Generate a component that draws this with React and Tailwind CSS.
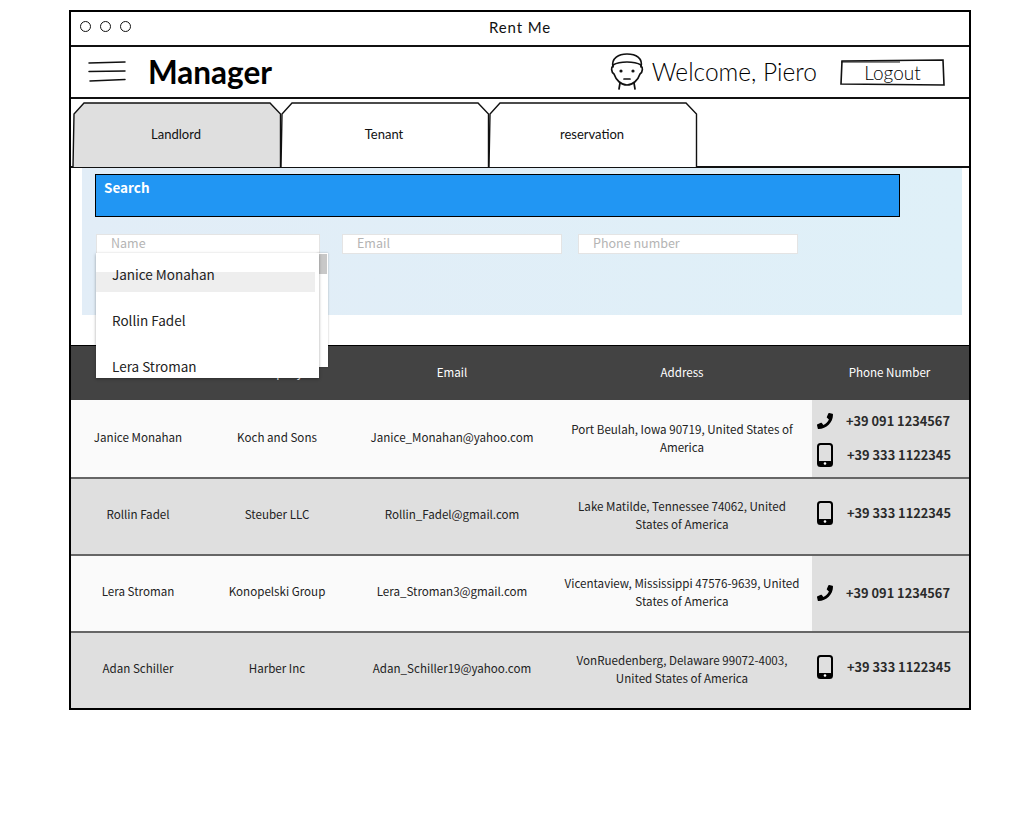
import React from 'react';
import { FaPhone } from 'react-icons/fa';

const people = [
  { name: 'Janice Monahan', company: 'Koch and Sons', email: 'Janice_Monahan@yahoo.com', address: 'Port Beulah, Iowa 90719, United States of America', phone: '+39 091 1234567', mobile: '+39 333 1122345' },
  { name: 'Rollin Fadel', company: 'Steuber LLC', email: 'Rollin_Fadel@gmail.com', address: 'Lake Matilde, Tennessee 74062, United States of America', mobile: '+39 333 1122345' },
  { name: 'Lera Stroman', company: 'Konopelski Group', email: 'Lera_Stroman3@gmail.com', address: 'Vicentaview, Mississippi 47576-9639, United States of America', phone: '+39 091 1234567' },
  { name: 'Adan Schiller', company: 'Harber Inc', email: 'Adan_Schiller19@yahoo.com', address: 'VonRuedenberg, Delaware 99072-4003, United States of America', mobile: '+39 333 1122345' },
];

const sketch = "font-['Lato',sans-serif]";

const MobileIcon = () => (
  <svg width="16" height="24" viewBox="0 0 16 24" className="shrink-0">
    <rect x="1" y="1" width="14" height="22" rx="2.5" fill="none" stroke="#000" strokeWidth="2" />
    <rect x="1" y="18" width="14" height="5" rx="1.5" fill="#000" />
    <circle cx="8" cy="20.5" r="1.3" fill="#fff" />
  </svg>
);

const Tab = ({ label, active }) => (
  <div className="relative w-[208px] h-[65px] flex items-center justify-center">
    <svg width="210" height="65" viewBox="0 0 210 65" className="absolute top-0 left-0">
      <path
        d="M1 65 L2 12 L12 1 L198 1 L208.5 12 L208.5 65"
        fill={active ? '#dfdfdf' : '#fff'}
        stroke="#111"
        strokeWidth="1.4"
      />
    </svg>
    <span className={`relative text-[13px] text-[#111] ${sketch}`}>{label}</span>
  </div>
);

const Dropdown = () => (
  <div className="absolute top-[19px] left-0 z-10">
    <div className="absolute top-0 left-[221px] w-[11px] h-[114px] bg-white shadow-[0_0_2px_rgba(0,0,0,0.25)]">
      <div className="ml-px mt-px w-[9px] h-5 bg-[#c8c8c8]" />
    </div>
    <div className="relative w-[223px] h-[125px] overflow-hidden bg-white shadow-[0_1px_3px_rgba(0,0,0,0.35)] text-[13.5px] text-[#222]">
      <div className="absolute top-[19px] left-0 w-[219px] h-5 bg-[#eeeeee]" />
      {['Janice Monahan', 'Rollin Fadel', 'Lera Stroman'].map((n) => (
        <div key={n} className="relative h-[46px] leading-[42px] pl-4">
          {n}
        </div>
      ))}
    </div>
  </div>
);

const Field = ({ placeholder, className }) => (
  <input
    placeholder={placeholder}
    className={`block h-5 bg-white border border-[#e4e4e4] pl-[14px] pb-1 text-[12.5px] placeholder:text-[#b4b4b4] outline-none ${className}`}
  />
);

const Row = ({ person, shaded, first }) => {
  const cell = `flex items-center justify-center ${first ? 'pb-[2px]' : 'pb-1'}`;
  return (
    <div className={`grid grid-cols-[134px_144px_206px_257px_157px] h-[77px] text-[11.6px] text-[#222] text-center ${first ? '' : 'border-t-2 border-[#666]'} ${shaded ? 'bg-[#dfdfdf]' : 'bg-[#fafafa]'}`}>
      <div className={cell}>{person.name}</div>
      <div className={cell}>{person.company}</div>
      <div className={cell}>{person.email}</div>
      <div className={`${cell} pl-[8px] pr-[11px] leading-[18px]`}>{person.address}</div>
      <div className={`flex flex-col justify-center bg-[#dfdfdf] font-bold text-[12.8px] text-[#2a2a2a] ${first ? '' : 'pb-1'}`}>
        {person.phone && (
          <div className="flex items-center h-[34px] mt-0.5 pl-[5px]">
            <FaPhone className="w-4 h-4 text-black shrink-0" />
            <span className="ml-[13px]">{person.phone}</span>
          </div>
        )}
        {person.mobile && (
          <div className="flex items-center h-[34px] mb-1 pl-[5px]">
            <MobileIcon />
            <span className="ml-[14px]">{person.mobile}</span>
          </div>
        )}
      </div>
    </div>
  );
};

export default function App() {
  return (
    <div className="min-h-[820px] bg-white pt-[10px] font-['Noto_Sans_CJK_JP','Noto_Sans',sans-serif]">
      <div className="ml-[69px] w-[902px] border-2 border-black">
        <div className="relative flex items-center justify-center h-[35px] pb-[2px] border-b-2 border-[#111]">
          <div className="absolute left-[9px] top-[9px] flex gap-[9px]">
            <span className="w-[11px] h-[11px] rounded-full border-[1.5px] border-[#111]" />
            <span className="w-[11px] h-[11px] rounded-full border-[1.5px] border-[#111]" />
            <span className="w-[11px] h-[11px] rounded-full border-[1.5px] border-[#111]" />
          </div>
          <span className={`text-[15px] tracking-[0.9px] text-[#111] ${sketch}`}>Rent Me</span>
        </div>

        <div className="flex items-center h-[52px] border-b-2 border-[#111]">
          <svg width="38" height="22" viewBox="0 0 38 22" className="ml-[17px]">
            <path d="M1 2 L37 1 M1 10.5 L37 10 M2 20 L37 18.5" stroke="#111" strokeWidth="1.5" strokeLinecap="round" />
          </svg>
          <span className="ml-[22px] mt-0.5 font-['Lato',sans-serif] font-bold text-[31.5px] leading-none text-black">Manager</span>
          <svg width="34" height="38" viewBox="0 0 34 38" className="ml-auto">
            <g fill="none" stroke="#111" strokeWidth="1.7" strokeLinecap="round" strokeLinejoin="round">
              <path d="M3 14 C1 5 9 1 17 1 C26 1 33 5 31 14" />
              <path d="M3 12 C10 8 24 8 31 12" />
              <path d="M3 13 C1 14 1 19 4 21 C6 27 11 32 17 32 C23 32 28 27 30 21 C33 19 33 14 31 13" />
              <path d="M10 30 L9 36 M24 30 L25 36" />
              <path d="M14 26 L20 26" />
            </g>
            <circle cx="11" cy="18" r="1.6" fill="#111" />
            <circle cx="23" cy="18" r="1.6" fill="#111" />
          </svg>
          <span className={`ml-2 text-[24.5px] font-light text-black ${sketch}`}>Welcome, Piero</span>
          <div className="relative ml-[23px] mr-6 w-[105px] h-[27px] flex items-center justify-center">
            <svg width="105" height="27" viewBox="0 0 105 27" className="absolute top-0 left-0">
              <path d="M2 2 L103 1 L104 26 L1 25 Z" fill="#fff" stroke="#111" strokeWidth="1.6" />
              <path d="M1 3 L60 3" stroke="#111" strokeWidth="1" />
            </svg>
            <span className={`relative mt-0.5 text-[19px] font-light text-black ${sketch}`}>Logout</span>
          </div>
        </div>

        <div className="flex h-[69px] pt-[3px] pl-px border-b-2 border-[#111]">
          <Tab label="Landlord" active />
          <Tab label="Tenant" />
          <Tab label="reservation" />
        </div>

        <div className="h-[177px] pl-[11px]">
          <div className="w-[880px] h-[147px] pl-[13px] pt-[6px] bg-gradient-to-r from-[#e2edf7] to-[#dff0f8]">
            <div className="w-[805px] h-[43px] bg-[#2196f3] border border-black px-2 pt-[2px] text-[13.5px] font-bold text-white">
              Search
            </div>
            <div className="flex mt-[17px] ml-px">
              <div className="relative">
                <Field placeholder="Name" className="w-[224px]" />
                <Dropdown />
              </div>
              <Field placeholder="Email" className="w-[220px] ml-[22px]" />
              <Field placeholder="Phone number" className="w-[220px] ml-4" />
            </div>
          </div>
        </div>

        <div className="grid grid-cols-[134px_144px_206px_257px_157px] h-[55px] items-center bg-[#434343] border-t border-black text-[11.6px] text-white text-center">
          <div>Name</div>
          <div>Company</div>
          <div>Email</div>
          <div className="pr-[3px]">Address</div>
          <div className="pr-[2px]">Phone Number</div>
        </div>
        {people.map((p, i) => (
          <Row key={p.name} person={p} shaded={i % 2 === 1} first={i === 0} />
        ))}
      </div>
    </div>
  );
}
